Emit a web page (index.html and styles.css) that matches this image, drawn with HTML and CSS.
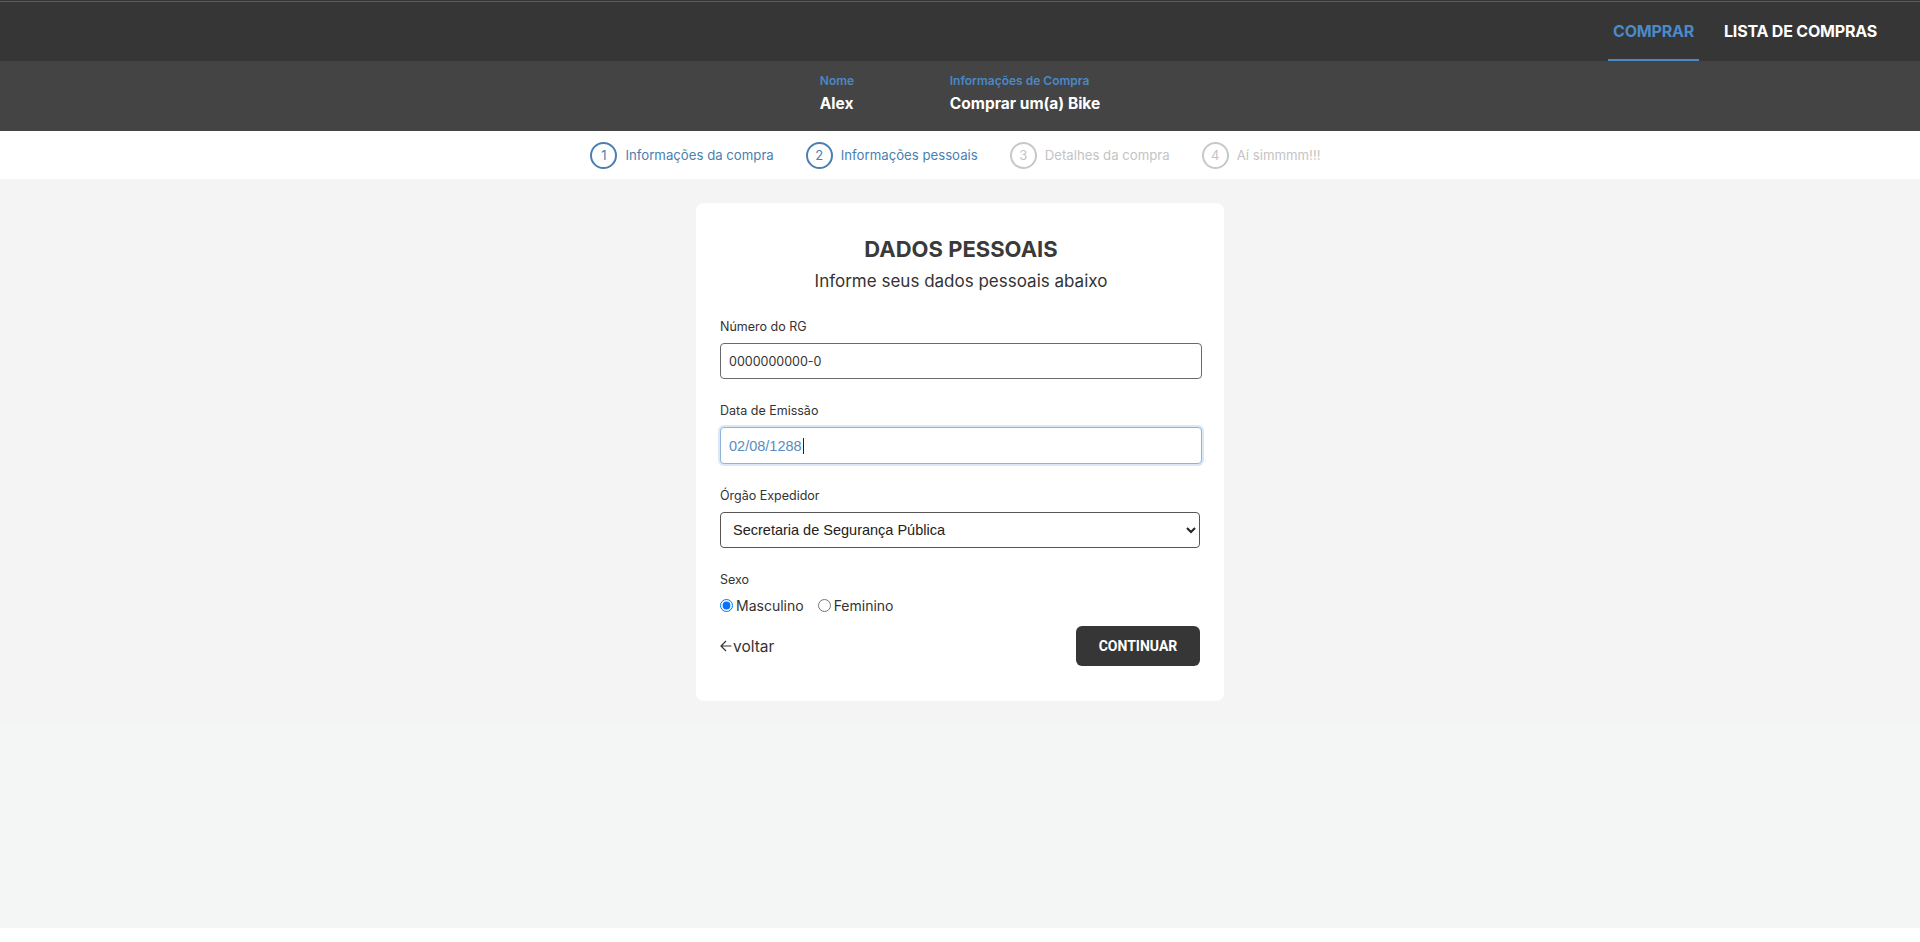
FILE: index.html
```html
<!DOCTYPE html>
<html lang="pt-BR">
<head>
<meta charset="utf-8">
<title>Dados pessoais</title>
<link rel="stylesheet" href="styles.css">
</head>
<body>
<div class="page">
  <header class="topnav">
    <nav class="menu">
      <a class="menu-item active" href="#">COMPRAR</a>
      <a class="menu-item" href="#">LISTA DE COMPRAS</a>
    </nav>
  </header>
  <section class="infobar">
    <div class="info-col info-name">
      <span class="info-label">Nome</span>
      <span class="info-value">Alex</span>
    </div>
    <div class="info-col">
      <span class="info-label">Informações de Compra</span>
      <span class="info-value">Comprar um(a) Bike</span>
    </div>
  </section>
  <section class="steps">
    <div class="step done"><span class="step-num">1</span><span class="step-text">Informações da compra</span></div>
    <div class="step done"><span class="step-num">2</span><span class="step-text">Informações pessoais</span></div>
    <div class="step"><span class="step-num">3</span><span class="step-text">Detalhes da compra</span></div>
    <div class="step"><span class="step-num">4</span><span class="step-text">Aí simmmm!!!</span></div>
  </section>
  <main class="main">
    <form class="card">
      <h1 class="card-title">DADOS PESSOAIS</h1>
      <p class="card-sub">Informe seus dados pessoais abaixo</p>
      <div class="field">
        <label class="field-label">Número do RG</label>
        <input class="input input-rg" type="text" value="0000000000-0">
      </div>
      <div class="field">
        <label class="field-label">Data de Emissão</label>
        <div class="input input-focus"><span class="date-text">02/08/1288</span><span class="caret"></span></div>
      </div>
      <div class="field">
        <label class="field-label">Órgão Expedidor</label>
        <select class="select">
          <option>Secretaria de Segurança Pública</option>
        </select>
      </div>
      <div class="field field-last">
        <label class="field-label">Sexo</label>
        <div class="radios">
          <label class="radio"><input type="radio" name="sexo" checked><span>Masculino</span></label>
          <label class="radio"><input type="radio" name="sexo"><span>Feminino</span></label>
        </div>
      </div>
      <div class="actions">
        <a class="back" href="#"><svg class="back-icon" width="12" height="12" viewBox="0 0 12 12"><path d="M11.5 6H1M6 1L1 6l5 5" fill="none" stroke="#333" stroke-width="1.2"/></svg>voltar</a>
        <button class="btn" type="button">CONTINUAR</button>
      </div>
    </form>
  </main>
</div>
</body>
</html>
```

FILE: styles.css
```css
html { background: #ffffff; }
body {
  margin: 0;
  font-family: "Inter", "Open Sans", sans-serif;
  color: #333;
}
.page {
  background: #f3f6f5;
  min-height: 928px;
}
.topnav {
  height: 61px;
  background: #363636;
  box-shadow: inset 0 1px 0 #363636, inset 0 2px 0 #5c5c5c;
  display: flex;
  justify-content: flex-end;
  padding-right: 38px;
}
.menu {
  display: flex;
  gap: 20px;
  height: 100%;
}
.menu-item {
  display: flex;
  align-items: center;
  padding: 2px 5px 0;
  border-bottom: 2px solid transparent;
  color: #ffffff;
  font-weight: 700;
  font-size: 16px;
  text-decoration: none;
  letter-spacing: -0.2px;
}
.menu-item.active {
  color: #4a8ac6;
  border-bottom-color: #4a8ac6;
}
.infobar {
  height: 70px;
  box-sizing: border-box;
  background: #444444;
  display: flex;
  justify-content: center;
  padding: 12px 0 16px;
}
.info-col {
  display: flex;
  flex-direction: column;
}
.info-name { width: 130px; }
.info-label {
  color: #4a88c7;
  font-size: 12px;
  font-weight: 600;
  line-height: 16px;
}
.info-value {
  color: #ffffff;
  font-size: 15.5px;
  font-weight: 700;
  line-height: 22px;
  margin-top: 4px;
}
.steps {
  height: 48px;
  background: #ffffff;
  display: flex;
  justify-content: center;
  align-items: center;
  gap: 32px;
  padding-right: 9px;
}
.step {
  display: flex;
  align-items: center;
  gap: 8px;
  color: #c4c4c4;
}
.step-num {
  width: 23px;
  height: 23px;
  border: 2px solid #c8c8c8;
  border-radius: 50%;
  display: flex;
  align-items: center;
  justify-content: center;
  font-size: 13px;
}
.step-text { font-size: 13.2px; }
.step.done { color: #4a7fb2; }
.step.done .step-num { border-color: #4a7fb2; }
.main {
  background: #f4f4f4;
  padding: 24px 0 21px;
  display: flex;
  justify-content: center;
}
.card {
  width: 528px;
  box-sizing: border-box;
  background: #ffffff;
  border-radius: 8px;
  padding: 30px 22px 35px 24px;
}
.card-title {
  margin: 0;
  text-align: center;
  font-size: 22px;
  line-height: 32px;
  font-weight: 700;
  color: #3a3a3a;
}
.card-sub {
  margin: 4px 0 25px;
  text-align: center;
  font-size: 17px;
  line-height: 24px;
  color: #333;
}
.field { margin-bottom: 23px; }
.field-last { margin-bottom: 12px; }
.field-label {
  display: block;
  font-size: 12.5px;
  line-height: 18px;
  margin-bottom: 7px;
  color: #333;
}
.input {
  display: block;
  box-sizing: border-box;
  width: 482px;
  height: 36px;
  border: 1px solid #6a6a6a;
  border-radius: 4px;
  padding: 0 8px;
  font-family: "Inter", sans-serif;
  font-size: 12.5px;
  color: #333;
  background: #fff;
}
.input-focus {
  display: flex;
  align-items: center;
  height: 37px;
  border-color: #8fb4dc;
  box-shadow: 0 0 0 2px #dbe8f5;
}
.date-text {
  font-family: "Liberation Sans", Arial, sans-serif;
  font-size: 14.5px;
  color: #5b8cc0;
}
.caret {
  width: 1px;
  height: 16px;
  background: #222;
  margin-left: 1px;
}
.select {
  display: block;
  width: 480px;
  height: 36px;
  border: 1px solid #555;
  border-radius: 4px;
  padding: 0 8px;
  font-family: "Liberation Sans", Arial, sans-serif;
  font-size: 14.5px;
  color: #222;
  background: #fff;
}
.radios {
  display: flex;
  gap: 14px;
  height: 18px;
  align-items: center;
}
.radio {
  display: flex;
  align-items: center;
  gap: 3px;
  font-size: 14px;
  color: #333;
}
.radio input {
  margin: 0;
  width: 13px;
  height: 13px;
}
.actions {
  display: flex;
  justify-content: space-between;
  align-items: center;
  width: 480px;
}
.back {
  display: flex;
  align-items: center;
  gap: 1px;
  font-size: 15.5px;
  color: #333;
  text-decoration: none;
}
.btn {
  width: 124px;
  height: 40px;
  border: none;
  border-radius: 6px;
  background: #363636;
  color: #ffffff;
  font-family: "Roboto", sans-serif;
  font-weight: 700;
  font-size: 14px;
}
```
